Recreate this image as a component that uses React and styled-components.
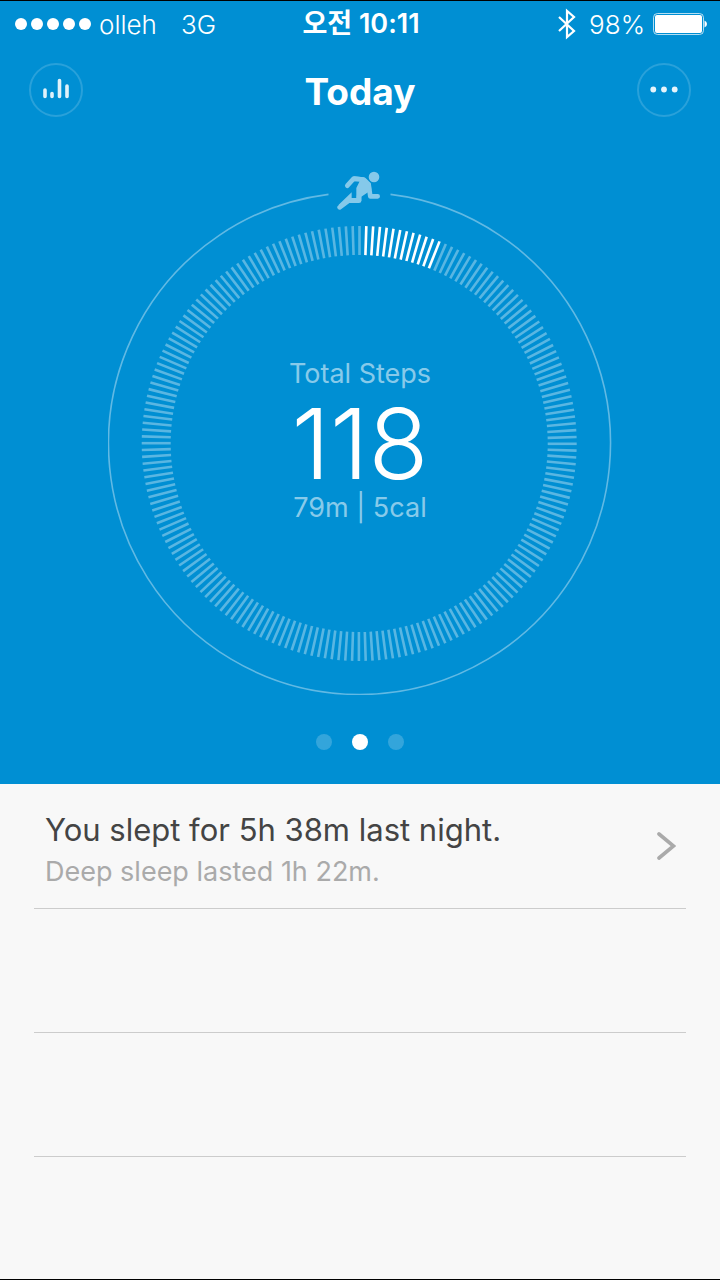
import React from 'react'
import styled, { createGlobalStyle } from 'styled-components'

const TICKS = 200
const ACTIVE_TICKS = 12
const PAGES = ['Sleep', 'Steps', 'Weight']

function StatusBar() {
    return (
        <StatusBarStyled>
            <div className="side">
                <SignalStyled>
                    {[1, 2, 3, 4, 5].map((dot) => <i key={dot} />)}
                </SignalStyled>
                <span className="carrier">olleh</span>
                <span>3G</span>
            </div>
            <span className="time">오전 10:11</span>
            <div className="side right">
                <svg className="bluetooth" width="18" height="32" viewBox="0 0 18 32" fill="none" stroke="#fff" strokeWidth="2.2">
                    <path d="M1 9 L16 23 L9 29 V3 L16 9 L1 23" />
                </svg>
                <span>98%</span>
                <svg width="54" height="22" viewBox="0 0 54 22">
                    <rect x="0.5" y="0.5" width="50" height="21" rx="4" fill="none" stroke="#fff" strokeOpacity="0.7" />
                    <rect x="2" y="2" width="47" height="18" rx="2" fill="#fff" />
                    <path d="M51.5 7.5 Q54 8.5 54 11 Q54 13.5 51.5 14.5 Z" fill="#fff" />
                </svg>
            </div>
        </StatusBarStyled>
    )
}

function NavBar() {
    return (
        <NavBarStyled>
            <RoundButton type="button" aria-label="Statistics">
                <svg width="28" height="24" viewBox="0 0 28 24" stroke="#fff" strokeOpacity="0.88" strokeWidth="3.6" strokeLinecap="round">
                    <path d="M3 12 V18.500 M10 15.500 V18.500 M17.500 2.500 V18.500 M25 8 V18.500" />
                </svg>
            </RoundButton>
            <h1>Today</h1>
            <RoundButton type="button" aria-label="More">
                <svg width="28" height="8" viewBox="0 0 28 8" fill="#fff" fillOpacity="0.9">
                    <circle cx="3.300" cy="3.500" r="2.900" />
                    <circle cx="14" cy="3.500" r="2.900" />
                    <circle cx="24.700" cy="3.500" r="2.900" />
                </svg>
            </RoundButton>
        </NavBarStyled>
    )
}

function Dial() {
    const ticks = Array.from({ length: TICKS }, (_, i) => i)

    return (
        <svg viewBox="0 0 504 526" aria-hidden="true">
            <path
                d="M282.500 25.400 A251 251 0 1 1 220.500 25.400"
                fill="none"
                stroke="#fff"
                strokeOpacity="0.38"
                strokeWidth="1.600"
            />
            <g stroke="#fff" strokeWidth="2.600">
                {ticks.map((i) => (
                    <line
                        key={i}
                        x1="251.500"
                        x2="251.500"
                        y1="57"
                        y2="86"
                        strokeOpacity={i > 0 && i <= ACTIVE_TICKS ? 1 : 0.35}
                        transform={`rotate(${(i * 360) / TICKS} 251.200 274.500)`}
                    />
                ))}
            </g>
            {/* runner in the gap of the outer ring */}
            <g transform="translate(202 -9) scale(0.3333)" opacity="0.52">
                <circle cx="192" cy="51" r="16" fill="#fff" />
                <g fill="none" stroke="#fff" strokeWidth="14" strokeLinecap="round" strokeLinejoin="round">
                    <path d="M112 77 L131 56 L160 59" />
                    <path d="M176 74 L181 109 H203" />
                    <path d="M147 108 V122 H116 L89 142" />
                </g>
                <path
                    d="M131 49 L160 52 Q166 53 170 57 L181 68 Q184 72 183 78 L184 90 L154 110 V124 H139 V84 L149 64 H131 Z M86 134 L125 97 V114 H142 V128 H112 L90 146 Z"
                    fill="#fff"
                />
            </g>
        </svg>
    )
}

function SleepRow() {
    return (
        <RowStyled>
            <a href="#sleep">
                <div>
                    <p className="title">You slept for 5h 38m last night.</p>
                    <p className="detail">Deep sleep lasted 1h 22m.</p>
                </div>
                <svg width="20" height="38" viewBox="0 0 20 38" fill="none" stroke="#aaa" strokeWidth="3.600" strokeLinecap="round">
                    <path d="M3 3 L17.500 15 L3 27" />
                </svg>
            </a>
        </RowStyled>
    )
}

function App() {
    return (
        <AppStyled>
            <GlobalStyle />
            <HeroStyled>
                <StatusBar />
                <NavBar />
                <GaugeStyled>
                    <Dial />
                    <div className="readout">
                        <p>Total Steps</p>
                        <strong>118</strong>
                        <p>79m | 5cal</p>
                    </div>
                </GaugeStyled>
                <PagerStyled>
                    {PAGES.map((page) => (
                        <PageDot key={page} type="button" aria-label={page} $current={page === 'Steps'} />
                    ))}
                </PagerStyled>
            </HeroStyled>
            <ListStyled>
                <SleepRow />
                <RowStyled />
                <RowStyled />
            </ListStyled>
        </AppStyled>
    )
}

const GlobalStyle = createGlobalStyle`
    * {
        margin: 0;
        padding: 0;
        box-sizing: border-box;
    }

    body {
        font-family: Inter, 'Noto Sans CJK KR', sans-serif;
        background: #f8f8f8;
    }

    svg {
        display: block;
    }
`

const AppStyled = styled.div`
    display: flex;
    flex-direction: column;
    min-height: 100vh;
    border-top: 1px solid #000;
    border-bottom: 1px solid #000;
`

const HeroStyled = styled.header`
    display: flex;
    flex-direction: column;
    align-items: center;
    padding-bottom: 34px;
    color: #fff;
    background: #008fd3;
`

const StatusBarStyled = styled.div`
    display: grid;
    grid-template-columns: 1fr auto 1fr;
    align-items: center;
    width: 100%;
    height: 46px;
    padding: 0 13px 0 15px;
    font-size: 26px;
    font-weight: 300;

    .side {
        display: flex;
        align-items: center;
    }

    .right {
        justify-content: flex-end;
        gap: 8px;
    }

    .carrier {
        margin: 0 24px 0 8px;
    }

    .bluetooth {
        margin-right: 5px;
    }

    .time {
        font-size: 27px;
        font-weight: 600;
        line-height: 46px;
    }
`

const SignalStyled = styled.div`
    display: flex;
    gap: 4px;

    i {
        width: 12px;
        height: 12px;
        border-radius: 50%;
        background: #fff;
    }
`

const NavBarStyled = styled.nav`
    display: flex;
    align-items: center;
    justify-content: space-between;
    width: 100%;
    padding: 16px 29px 0;

    h1 {
        padding-top: 4px;
        font-size: 37px;
        font-weight: 700;
        line-height: 50px;
    }
`

const RoundButton = styled.button`
    display: flex;
    align-items: center;
    justify-content: center;
    width: 54px;
    height: 54px;
    border: 2px solid rgba(255, 255, 255, 0.16);
    border-radius: 50%;
    background: none;
`

const GaugeStyled = styled.section`
    display: grid;
    width: 70%;
    margin-top: 52px;

    svg, .readout {
        grid-area: 1 / 1;
    }

    svg {
        width: 100%;
    }

    .readout {
        align-self: center;
        padding-top: 18px;
        text-align: center;
    }

    p {
        font-size: 27px;
        line-height: 32px;
        color: rgba(255, 255, 255, 0.55);
    }

    strong {
        display: block;
        padding-top: 6px;
        font-size: 98px;
        font-weight: 300;
        line-height: 96px;
    }
`

const PagerStyled = styled.div`
    display: flex;
    gap: 20px;
    margin-top: 39px;
`

const PageDot = styled.button`
    width: 16px;
    height: 16px;
    border: 0;
    border-radius: 50%;
    background: ${(props) => (props.$current ? '#fff' : 'rgba(255, 255, 255, 0.2)')};
`

const ListStyled = styled.ul`
    flex: 1;
    padding: 1px 34px 0;
    list-style: none;
`

const RowStyled = styled.li`
    height: 124px;
    border-bottom: 1px solid #ccc;

    a {
        display: flex;
        align-items: center;
        justify-content: space-between;
        height: 100%;
        padding: 6px 10px 0 11px;
        text-decoration: none;
    }

    .title {
        font-size: 31px;
        line-height: 44px;
        color: #444;
    }

    .detail {
        font-size: 27px;
        line-height: 40px;
        color: #aaa;
    }
`

export default App
